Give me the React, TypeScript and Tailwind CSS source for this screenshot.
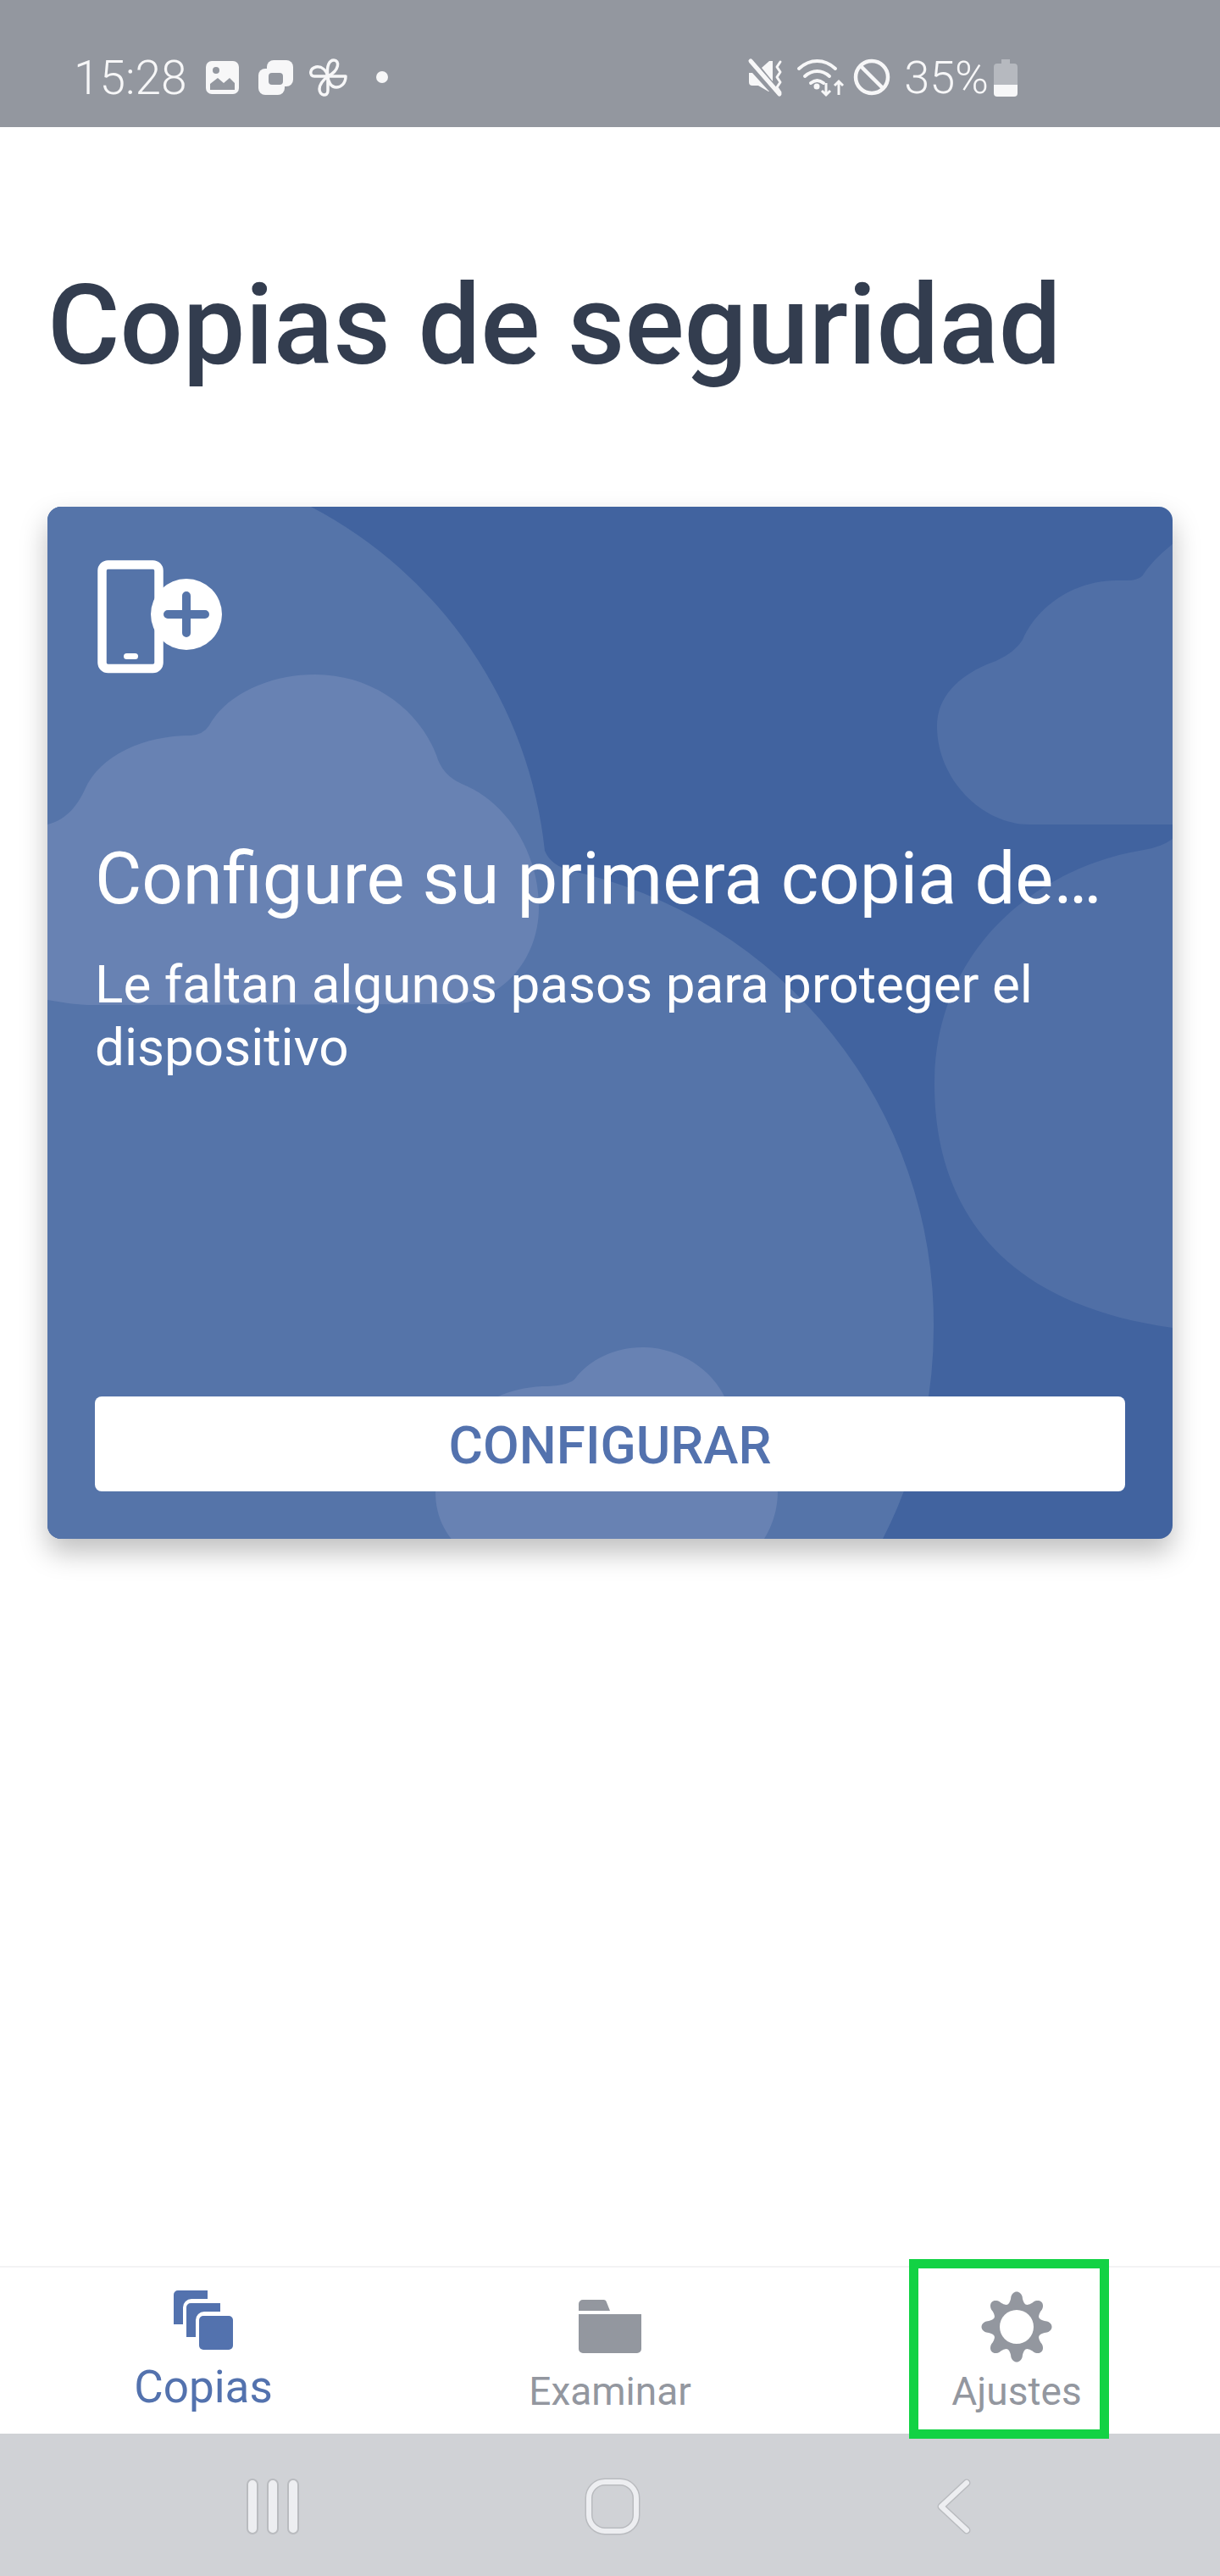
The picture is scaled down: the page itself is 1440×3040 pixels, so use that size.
import React from "react";

function gearPath(cx: number, cy: number): string {
  const pts: string[] = [];
  const n = 240;
  for (let i = 0; i < n; i++) {
    const a = (i / n) * Math.PI * 2 - Math.PI / 2;
    const w = Math.cos(8 * (a + Math.PI / 2));
    const r = 35 + 6.5 * Math.sign(w) * Math.pow(Math.abs(w), 0.7);
    pts.push(`${(cx + r * Math.cos(a)).toFixed(2)} ${(cy + r * Math.sin(a)).toFixed(2)}`);
  }
  return `M${pts.join("L")}Z`;
}

function CardArt() {
  return (
    <svg className="absolute inset-0 h-full w-full" viewBox="56 598 1328 1218" aria-hidden="true">
      <path
        d="M0 560 L310 560 L367 598 A520 520 0 0 1 643 1004 Q650 1021 672 1027 A548 548 0 0 1 1102 1566 A548 548 0 0 1 1042 1816 L1020 1860 L0 1860 Z"
        fill="#5574a9"
      />
      <path
        d="M1420 620 L1384 642 Q1360 661 1348 680 Q1342 685 1330 685 L1317 685 C1270 685 1225 714 1207 755 Q1195 774 1165 784 C1130 799 1106 823 1106 857 C1106 920 1160 973 1215 973 L1420 973 Z"
        fill="#506fa6"
      />
      <path
        d="M1420 979 L1384 990 Q1370 1000 1350 1003 C1230 1022 1103 1115 1103 1280 C1103 1390 1150 1535 1384 1567 L1420 1570 Z"
        fill="#506fa6"
      />
      <path
        d="M20 979 L56 973 C80 967 92 949 100 932 C118 891 170 868 225 868 Q240 867 247 856 C268 818 320 796 372 796 C440 796 495 838 515 891 Q522 915 545 925 C600 947 636 1008 636 1071 C636 1134 590 1185 530 1185 L110 1186 C90 1186 70 1183 20 1173 Z"
        fill="#6882b3"
      />
      <path
        d="M514 1760 C514 1700 560 1640 640 1636 Q668 1636 678 1628 C695 1605 725 1590 758 1590 C800 1590 840 1615 856 1650 C880 1660 918 1700 918 1760 C918 1790 905 1816 891 1830 L545 1830 C525 1810 514 1790 514 1760 Z"
        fill="#6882b3"
      />
    </svg>
  );
}

export default function App() {
  return (
    <div className="flex h-[3040px] w-[1440px] flex-col bg-white font-['Roboto',sans-serif]">
      <div className="relative flex h-[150px] shrink-0 items-start justify-between bg-[#93979f] pl-[87px] pr-[239px] pt-[57px] text-white">
        <div className="flex items-center">
          <span className="text-[55px] font-light leading-[70px] text-[#f7f7f8]">15:28</span>
          <svg className="ml-[22px] h-[46px] w-[208px]" viewBox="244 70 208 46" overflow="visible" fill="none">
            <rect x="244" y="73" width="39" height="39" rx="7" fill="#f7f7f8" />
            <circle cx="256" cy="84" r="4" fill="#93979f" />
            <path d="M249 107 V100 L258 93 L265 99 L272 93 L278 99 V107 Z" fill="#93979f" />
            <rect x="316" y="72" width="31" height="31" rx="8" fill="#f7f7f8" />
            <rect x="306" y="82" width="31" height="31" rx="8" fill="#f7f7f8" />
            <rect x="318" y="87" width="17" height="14" rx="4" fill="#93979f" />
            <g stroke="#f7f7f8" strokeWidth="3.5" strokeLinejoin="round">
              <path d="M388 91 C386 78 390 72 395 72 C402 72 402 84 388 91 Z" />
              <path d="M388 91 H409 C409 100 403 104 398 104 C392 104 388 98 388 91 Z" />
              <path d="M388 91 H372 C366 91 366 82 374 80 C381 79 386 84 388 91 Z" />
              <path d="M388 91 V108 C388 116 378 114 378 106 C378 100 383 95 388 91 Z" />
            </g>
            <circle cx="452" cy="92" r="7" fill="#f7f7f8" />
          </svg>
        </div>
        <div className="flex items-center">
          <svg className="h-[46px] w-[171px]" viewBox="885 70 171 46" overflow="visible" fill="none">
            <path d="M885 73 L919 112" stroke="#f7f7f8" strokeWidth="5" strokeLinecap="round" />
            <path d="M883 87 h4 l20 22 -1 0 -12 -7 h-7 a4 4 0 0 1 -4 -4 Z M898 81 l9 -8 h4 v24 Z" fill="#f7f7f8" />
            <path d="M920 74 l-4 6 4 6 -4 6 4 6 -4 6 4 6" stroke="#f7f7f8" strokeWidth="3" strokeLinecap="round" strokeLinejoin="round" />
            <g stroke="#f7f7f8" strokeWidth="4" strokeLinecap="round" transform="translate(-2 0)">
              <path d="M944 82 C957 70 974 70 987 82" />
              <path d="M951 91 C960 83 971 83 980 91" />
              <path d="M958 99 C963 95 968 95 973 99" />
            </g>
            <circle cx="963" cy="103" r="3.5" fill="#f7f7f8" />
            <path d="M974 99 v13 m-5 -4 l5 5 5 -5 M989 113 v-16 m-5 5 l5 -5 5 5" stroke="#f7f7f8" strokeWidth="3" />
            <circle cx="1028" cy="92" r="19" stroke="#f7f7f8" strokeWidth="4.5" />
            <path d="M1015 79 L1041 105" stroke="#f7f7f8" strokeWidth="4.5" />
          </svg>
          <span className="ml-[10px] text-[54px] font-light leading-[70px] text-[#f7f7f8]">35%</span>
          <svg className="ml-[6px] h-[44px] w-[28px]" viewBox="0 0 28 44">
            <path d="M9 0 h10 v5 h5 a4 4 0 0 1 4 4 v21 H0 V9 a4 4 0 0 1 4 -4 h5 Z" fill="#b6b9bf" />
            <path d="M0 30 h28 v10 a4 4 0 0 1 -4 4 H4 a4 4 0 0 1 -4 -4 Z" fill="#f7f7f8" />
          </svg>
        </div>
      </div>

      <main className="flex flex-1 flex-col px-[56px]">
        <h1 className="mt-[159px] text-[131px] font-medium leading-[150px] text-[#333d4f]">Copias de seguridad</h1>
        <section className="relative mt-[139px] flex h-[1218px] flex-col overflow-hidden rounded-[16px] bg-[#41639f] px-[56px] pb-[56px] pt-[63px] shadow-[0_16px_32px_rgba(0,0,0,0.25)]">
          <CardArt />
          <div className="relative flex flex-1 flex-col">
            <svg className="ml-[3px] h-[134px] w-[148px]" viewBox="0 0 148 134" fill="none">
              <rect x="5.5" y="5.5" width="67" height="122.5" rx="7" stroke="#fff" strokeWidth="10.5" />
              <rect x="31" y="110" width="17" height="7" rx="3.5" fill="#fff" />
              <circle cx="105" cy="64" r="42" fill="#fff" />
              <path d="M105 42 v44 M83 64 h44" stroke="#5574a9" strokeWidth="10" strokeLinecap="round" />
            </svg>
            <h2 className="mt-[187px] whitespace-nowrap text-[85px] font-normal leading-[110px] text-white">Configure su primera copia de…</h2>
            <p className="mt-[33px] text-[62px] font-normal leading-[74px] text-white">Le faltan algunos pasos para proteger el dispositivo</p>
            <button className="mt-auto h-[112px] w-full rounded-[8px] bg-white pt-[2px] text-[62px] font-medium text-[#5372ae]">CONFIGURAR</button>
          </div>
        </section>
      </main>

      <nav className="relative grid h-[198px] shrink-0 grid-cols-[480px_480px_480px] border-t-2 border-[#f3f3f4] bg-white">
        <div className="flex flex-col items-center pt-[27px] text-[#5372ae]">
          <svg className="h-[70px] w-[70px]" viewBox="0 0 70 70" fill="#5372ae">
            <path d="M0 40 V5 a5 5 0 0 1 5 -5 H40 V10 H21 a10 10 0 0 0 -10 10 V40 Z" />
            <path d="M15 55 V20 a5 5 0 0 1 5 -5 H55 V25 H36 a10 10 0 0 0 -10 10 V55 Z" />
            <rect x="30" y="30" width="40" height="40" rx="5" />
          </svg>
          <span className="mt-[12px] text-[53px] leading-[64px]">Copias</span>
        </div>
        <div className="flex flex-col items-center pt-[38px] text-[#93979f]">
          <svg className="h-[63px] w-[74px]" viewBox="0 0 74 63" fill="#93979f">
            <path d="M0 5 a5 5 0 0 1 5 -5 h24 a4 4 0 0 1 4 3 l4 10 H0 Z M0 17 h74 v41 a5 5 0 0 1 -5 5 H5 a5 5 0 0 1 -5 -5 Z" />
          </svg>
          <span className="mt-[16px] text-[46px] leading-[58px]">Examinar</span>
        </div>
        <div className="flex flex-col items-center pt-[28px] text-[#93979f]">
          <svg className="h-[84px] w-[84px]" viewBox="0 0 84 84">
            <path d={`${gearPath(42, 42)}M42 22a20 20 0 1 0 0 40a20 20 0 1 0 0 -40Z`} fill="#93979f" fillRule="evenodd" />
          </svg>
          <span className="mt-[5px] text-[46px] leading-[58px]">Ajustes</span>
        </div>
        <div className="absolute left-[1073px] top-[-10px] z-10 h-[212px] w-[236px] border-[11px] border-[#12d244]" />
      </nav>

      <div className="flex h-[168px] shrink-0 items-center bg-[#d0d2d6] pl-[291px] pt-[4px]">
        <svg className="h-[66px] w-[62px]" viewBox="0 0 62 66" fill="#edeef1" stroke="#b9bbbf" strokeWidth="2">
          <rect x="1" y="1" width="12" height="64" rx="6" />
          <rect x="25" y="1" width="12" height="64" rx="6" />
          <rect x="49" y="1" width="12" height="64" rx="6" />
        </svg>
        <svg className="ml-[337px] h-[68px] w-[66px]" viewBox="0 0 66 68" fill="none">
          <rect x="5" y="5" width="56" height="58" rx="19" stroke="#b9bbbf" strokeWidth="9" />
          <rect x="5" y="5" width="56" height="58" rx="19" stroke="#edeef1" strokeWidth="6" />
        </svg>
        <svg className="ml-[349px] h-[66px] w-[42px]" viewBox="0 0 42 66" fill="none" strokeLinecap="round" strokeLinejoin="round">
          <path d="M36 5 L6 33 L36 61" stroke="#b9bbbf" strokeWidth="9" />
          <path d="M36 5 L6 33 L36 61" stroke="#edeef1" strokeWidth="6" />
        </svg>
      </div>
    </div>
  );
}
